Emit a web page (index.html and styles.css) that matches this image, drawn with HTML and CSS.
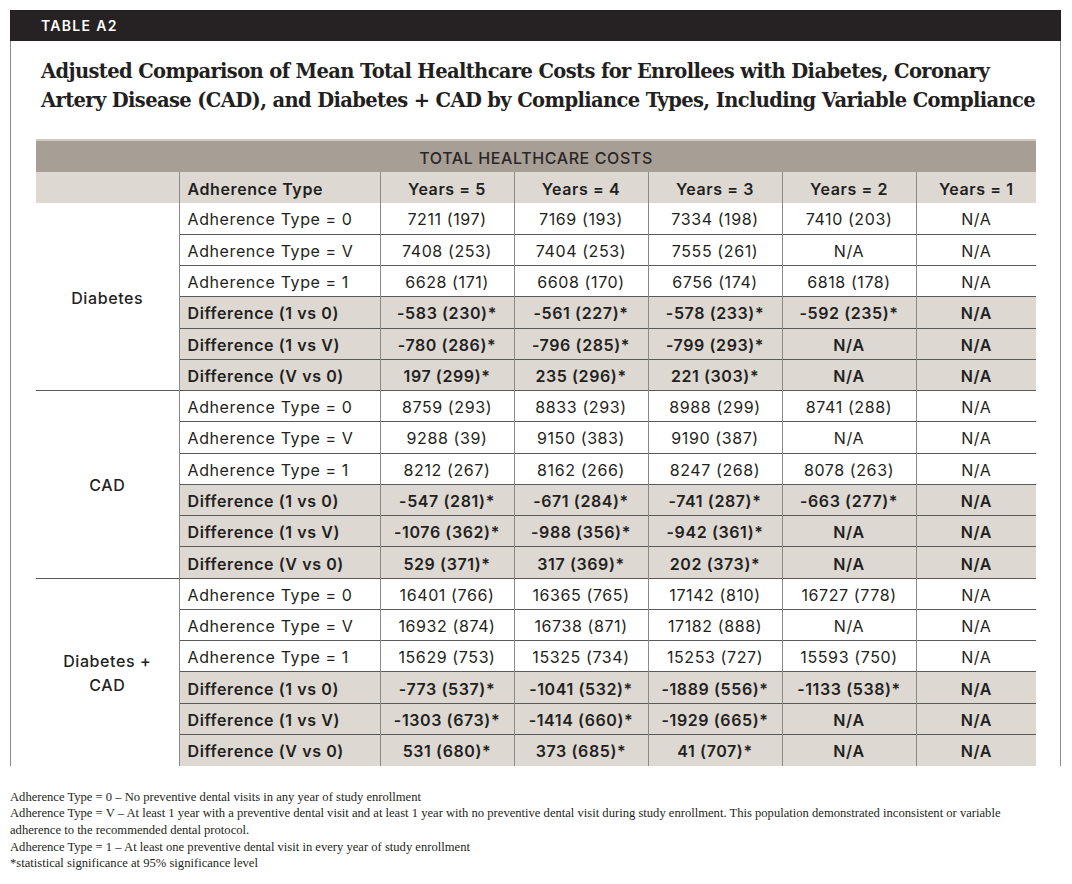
FILE: index.html
```html
<!DOCTYPE html>
<html>
<head>
<meta charset="utf-8">
<link rel="stylesheet" href="styles.css">
</head>
<body>
<div class="page">
  <div class="bar">TABLE A2</div>
  <div class="box">
    <h1 class="title">Adjusted Comparison of Mean Total Healthcare Costs for Enrollees with Diabetes, Coronary<br>Artery Disease (CAD), and Diabetes + CAD by Compliance Types, Including Variable Compliance</h1>
    <table class="tbl">
      <colgroup>
        <col class="c-grp"><col class="c-type"><col class="c-y"><col class="c-y"><col class="c-y"><col class="c-y"><col class="c-y1">
      </colgroup>
      <thead>
        <tr class="band"><th colspan="7">TOTAL HEALTHCARE COSTS</th></tr>
        <tr class="hdr">
          <th class="grp"></th>
          <th class="type">Adherence Type</th>
          <th>Years = 5</th><th>Years = 4</th><th>Years = 3</th><th>Years = 2</th><th>Years = 1</th>
        </tr>
      </thead>
      <tbody>
        <tr class="first">
          <td class="grp" rowspan="6">Diabetes</td>
          <td class="type">Adherence Type = 0</td><td>7211 (197)</td><td>7169 (193)</td><td>7334 (198)</td><td>7410 (203)</td><td>N/A</td>
        </tr>
        <tr><td class="type">Adherence Type = V</td><td>7408 (253)</td><td>7404 (253)</td><td>7555 (261)</td><td>N/A</td><td>N/A</td></tr>
        <tr><td class="type">Adherence Type = 1</td><td>6628 (171)</td><td>6608 (170)</td><td>6756 (174)</td><td>6818 (178)</td><td>N/A</td></tr>
        <tr class="diff"><td class="type">Difference (1 vs 0)</td><td>-583 (230)*</td><td>-561 (227)*</td><td>-578 (233)*</td><td>-592 (235)*</td><td>N/A</td></tr>
        <tr class="diff"><td class="type">Difference (1 vs V)</td><td>-780 (286)*</td><td>-796 (285)*</td><td>-799 (293)*</td><td>N/A</td><td>N/A</td></tr>
        <tr class="diff"><td class="type">Difference (V vs 0)</td><td>197 (299)*</td><td>235 (296)*</td><td>221 (303)*</td><td>N/A</td><td>N/A</td></tr>

        <tr class="sec">
          <td class="grp" rowspan="6">CAD</td>
          <td class="type">Adherence Type = 0</td><td>8759 (293)</td><td>8833 (293)</td><td>8988 (299)</td><td>8741 (288)</td><td>N/A</td>
        </tr>
        <tr><td class="type">Adherence Type = V</td><td>9288 (39)</td><td>9150 (383)</td><td>9190 (387)</td><td>N/A</td><td>N/A</td></tr>
        <tr><td class="type">Adherence Type = 1</td><td>8212 (267)</td><td>8162 (266)</td><td>8247 (268)</td><td>8078 (263)</td><td>N/A</td></tr>
        <tr class="diff"><td class="type">Difference (1 vs 0)</td><td>-547 (281)*</td><td>-671 (284)*</td><td>-741 (287)*</td><td>-663 (277)*</td><td>N/A</td></tr>
        <tr class="diff"><td class="type">Difference (1 vs V)</td><td>-1076 (362)*</td><td>-988 (356)*</td><td>-942 (361)*</td><td>N/A</td><td>N/A</td></tr>
        <tr class="diff"><td class="type">Difference (V vs 0)</td><td>529 (371)*</td><td>317 (369)*</td><td>202 (373)*</td><td>N/A</td><td>N/A</td></tr>

        <tr class="sec">
          <td class="grp" rowspan="6">Diabetes +<br>CAD</td>
          <td class="type">Adherence Type = 0</td><td>16401 (766)</td><td>16365 (765)</td><td>17142 (810)</td><td>16727 (778)</td><td>N/A</td>
        </tr>
        <tr><td class="type">Adherence Type = V</td><td>16932 (874)</td><td>16738 (871)</td><td>17182 (888)</td><td>N/A</td><td>N/A</td></tr>
        <tr><td class="type">Adherence Type = 1</td><td>15629 (753)</td><td>15325 (734)</td><td>15253 (727)</td><td>15593 (750)</td><td>N/A</td></tr>
        <tr class="diff"><td class="type">Difference (1 vs 0)</td><td>-773 (537)*</td><td>-1041 (532)*</td><td>-1889 (556)*</td><td>-1133 (538)*</td><td>N/A</td></tr>
        <tr class="diff"><td class="type">Difference (1 vs V)</td><td>-1303 (673)*</td><td>-1414 (660)*</td><td>-1929 (665)*</td><td>N/A</td><td>N/A</td></tr>
        <tr class="diff"><td class="type">Difference (V vs 0)</td><td>531 (680)*</td><td>373 (685)*</td><td>41 (707)*</td><td>N/A</td><td>N/A</td></tr>
      </tbody>
    </table>
  </div>
  <div class="notes">
    <p>Adherence Type = 0 – No preventive dental visits in any year of study enrollment</p>
    <p>Adherence Type = V – At least 1 year with a preventive dental visit and at least 1 year with no preventive dental visit during study enrollment. This population demonstrated inconsistent or variable<br>adherence to the recommended dental protocol.</p>
    <p>Adherence Type = 1 – At least one preventive dental visit in every year of study enrollment</p>
    <p>*statistical significance at 95% significance level</p>
  </div>
</div>
</body>
</html>
```
FILE: styles.css
```css
* { box-sizing: border-box; }
body {
  margin: 0;
  background: #ffffff;
  color: #231f20;
}
.page {
  padding: 10px 11px 0 10px;
}
.bar {
  height: 31px;
  background: #262223;
  color: #ffffff;
  font-family: Inter, "Open Sans", sans-serif;
  font-weight: 600;
  font-size: 14px;
  letter-spacing: 1.3px;
  line-height: 31px;
  padding-left: 31px;
}
.box {
  border-left: 1px solid #8c8c8c;
  border-right: 1px solid #8c8c8c;
  padding: 16px 0 0 0;
}
.title {
  margin: 0 0 24px 30px;
  font-family: "DejaVu Serif", "Liberation Serif", serif;
  font-weight: 700;
  font-size: 19.5px;
  line-height: 29px;
  letter-spacing: -0.63px;
  color: #231f20;
}
.tbl {
  margin-left: 25px;
  width: 1000px;
  border-collapse: collapse;
  table-layout: fixed;
  font-family: Inter, "Open Sans", sans-serif;
  font-size: 16px;
  letter-spacing: 0.6px;
  color: #231f20;
}
.c-grp { width: 143px; }
.c-type { width: 201px; }
.c-y { width: 134px; }
.c-y1 { width: 120px; }
.tbl th, .tbl td {
  padding: 2px 0 0 0;
  text-align: center;
  vertical-align: middle;
  white-space: nowrap;
}
.band th {
  background: #a79f95;
  height: 32px;
  font-weight: 500;
  color: #2b2626;
  border-top: 2px solid #cfc9c2;
}
.hdr th {
  background: #ddd8d2;
  height: 31px;
  font-weight: 600;
  border-left: 1px solid #8a8a8a;
}
.hdr th.grp { border-left: none; }
.tbl tbody tr { height: 31.28px; }
.tbl td {
  border-top: 1px solid #5a5a5a;
  border-left: 1px solid #8a8a8a;
}
.tbl tr.first td { border-top: none; }
.tbl td.grp {
  border-left: none;
  background: #ffffff;
  font-weight: 500;
  line-height: 24px;
}
.tbl .type {
  text-align: left;
  padding-left: 8px;
}
.tbl tr.diff td { background: #ddd8d2; font-weight: 600; }
.tbl tr.diff td.grp { background: #ffffff; }
.notes {
  margin-top: 23px;
  font-family: "Liberation Serif", serif;
  font-size: 12.6px;
  line-height: 16.6px;
  color: #231f20;
}
.notes p { margin: 0; }
```
